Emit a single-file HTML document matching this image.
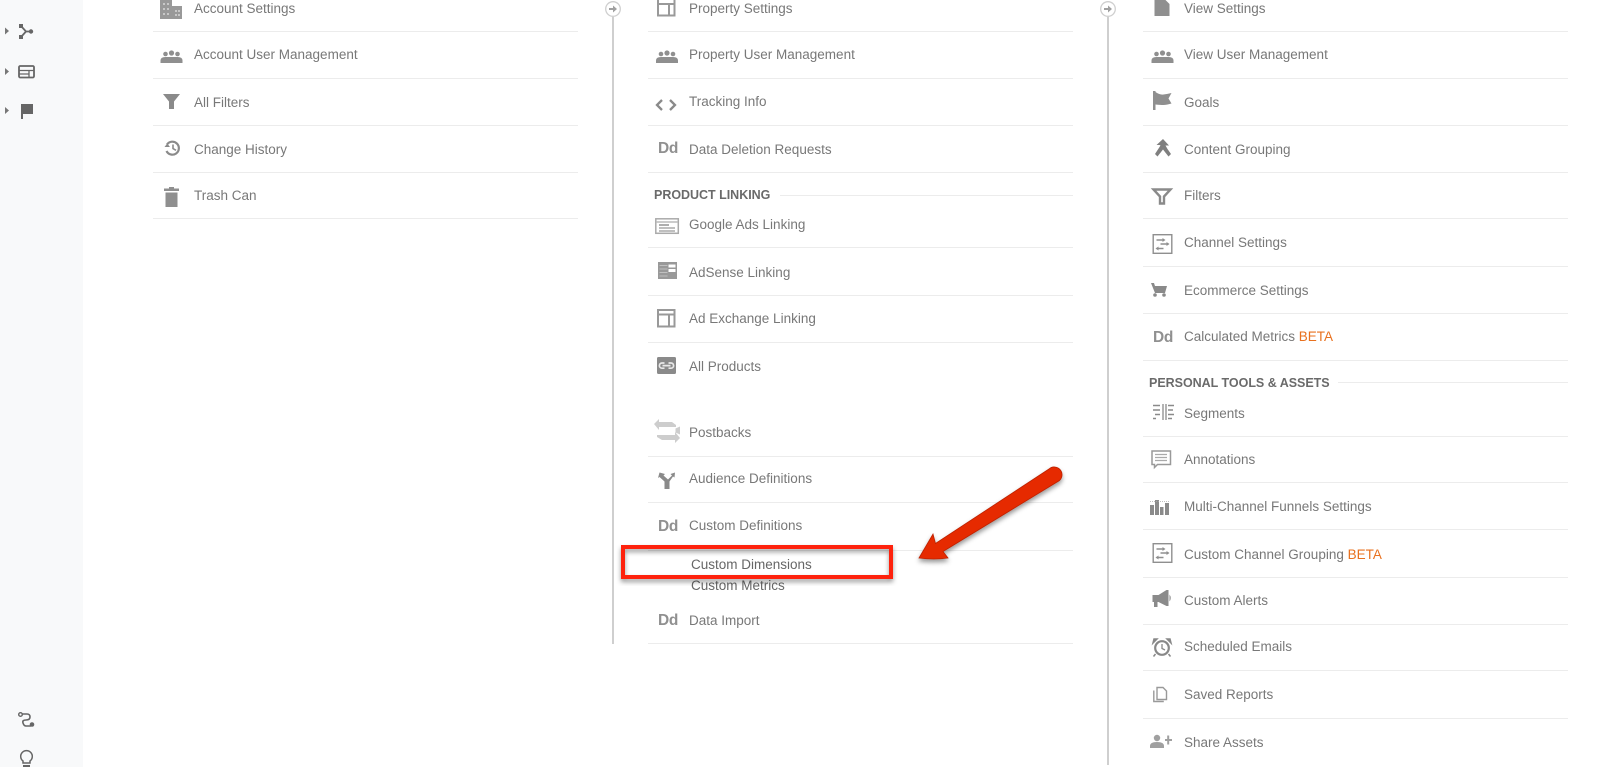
<!DOCTYPE html>
<html lang="en"><head><meta charset="utf-8"><title>Admin</title>
<style>
html,body{margin:0;padding:0;background:#fff}
#p{position:relative;width:1600px;height:767px;overflow:hidden;background:#fff;font-family:"Liberation Sans",sans-serif;filter:blur(.35px)}
#side{position:absolute;left:0;top:0;width:83px;height:767px;background:#f8f9fa}
.t{position:absolute;margin-top:1px;line-height:20px;font-size:13.5px;letter-spacing:0;color:#787878;white-space:nowrap}
.h{position:absolute;margin-top:1px;line-height:20px;font-size:12.5px;font-weight:bold;letter-spacing:-.02px;color:#6a6a6a;white-space:nowrap}
.d{position:absolute;margin-top:1px;line-height:20px;font-size:15.5px;font-weight:bold;color:#909090;letter-spacing:-.3px}
.b{color:#e8711f}
.s{position:absolute;height:1px;background:#ececec}
.c1{left:153px;width:425px}.c2{left:648px;width:425px}.c3{left:1143px;width:425px}
svg{position:absolute;left:0;top:0}
</style></head><body><div id="p">
<div id="side"></div>

<div class="s c1" style="top:31px"></div><div class="s c1" style="top:78px"></div><div class="s c1" style="top:125px"></div><div class="s c1" style="top:172px"></div><div class="s c1" style="top:218px"></div>
<div class="s c2" style="top:31px"></div><div class="s c2" style="top:78px"></div><div class="s c2" style="top:125px"></div><div class="s c2" style="top:172px"></div>
<div class="s" style="left:780px;width:293px;top:195px"></div>
<div class="s c2" style="top:247px"></div><div class="s c2" style="top:295px"></div><div class="s c2" style="top:342px"></div><div class="s c2" style="top:456px"></div><div class="s c2" style="top:502px"></div><div class="s c2" style="top:550px"></div><div class="s c2" style="top:643px"></div>
<div class="s c3" style="top:31px"></div><div class="s c3" style="top:78px"></div><div class="s c3" style="top:125px"></div><div class="s c3" style="top:172px"></div><div class="s c3" style="top:218px"></div><div class="s c3" style="top:266px"></div><div class="s c3" style="top:313px"></div><div class="s c3" style="top:360px"></div>
<div class="s" style="left:1338px;width:230px;top:382px"></div>
<div class="s c3" style="top:436px"></div><div class="s c3" style="top:482px"></div><div class="s c3" style="top:529px"></div><div class="s c3" style="top:577px"></div><div class="s c3" style="top:624px"></div><div class="s c3" style="top:670px"></div><div class="s c3" style="top:718px"></div>

<div class="t" style="left:194px;top:-2px">Account Settings</div>
<div class="t" style="left:194px;top:44px">Account User Management</div>
<div class="t" style="left:194px;top:92px">All Filters</div>
<div class="t" style="left:194px;top:139px">Change History</div>
<div class="t" style="left:194px;top:185px">Trash Can</div>

<div class="t" style="left:689px;top:-2px">Property Settings</div>
<div class="t" style="left:689px;top:44px">Property User Management</div>
<div class="t" style="left:689px;top:91px">Tracking Info</div>
<div class="t" style="left:689px;top:139px">Data Deletion Requests</div>
<div class="h" style="left:654px;top:184px">PRODUCT LINKING</div>
<div class="t" style="left:689px;top:214px">Google Ads Linking</div>
<div class="t" style="left:689px;top:262px">AdSense Linking</div>
<div class="t" style="left:689px;top:308px">Ad Exchange Linking</div>
<div class="t" style="left:689px;top:356px">All Products</div>
<div class="t" style="left:689px;top:422px">Postbacks</div>
<div class="t" style="left:689px;top:468px">Audience Definitions</div>
<div class="t" style="left:689px;top:515px">Custom Definitions</div>
<div class="t" style="left:691px;top:554px;color:#666">Custom Dimensions</div>
<div class="t" style="left:691px;top:575px;color:#666">Custom Metrics</div>
<div class="t" style="left:689px;top:610px">Data Import</div>

<div class="t" style="left:1184px;top:-2px">View Settings</div>
<div class="t" style="left:1184px;top:44px">View User Management</div>
<div class="t" style="left:1184px;top:92px">Goals</div>
<div class="t" style="left:1184px;top:139px">Content Grouping</div>
<div class="t" style="left:1184px;top:185px">Filters</div>
<div class="t" style="left:1184px;top:232px">Channel Settings</div>
<div class="t" style="left:1184px;top:280px">Ecommerce Settings</div>
<div class="t" style="left:1184px;top:326px">Calculated Metrics <span class="b">BETA</span></div>
<div class="h" style="left:1149px;top:372px">PERSONAL TOOLS &amp; ASSETS</div>
<div class="t" style="left:1184px;top:403px">Segments</div>
<div class="t" style="left:1184px;top:449px">Annotations</div>
<div class="t" style="left:1184px;top:496px">Multi-Channel Funnels Settings</div>
<div class="t" style="left:1184px;top:544px">Custom Channel Grouping <span class="b">BETA</span></div>
<div class="t" style="left:1184px;top:590px">Custom Alerts</div>
<div class="t" style="left:1184px;top:636px">Scheduled Emails</div>
<div class="t" style="left:1184px;top:684px">Saved Reports</div>
<div class="t" style="left:1184px;top:732px">Share Assets</div>

<div class="d" style="left:658px;top:138px">Dd</div>
<div class="d" style="left:658px;top:516px">Dd</div>
<div class="d" style="left:658px;top:610px">Dd</div>
<div class="d" style="left:1153px;top:327px">Dd</div>

<svg width="1600" height="767" viewBox="0 0 1600 767" xmlns="http://www.w3.org/2000/svg">
<defs>
<filter id="sh" x="-20%" y="-20%" width="140%" height="150%"><feDropShadow dx="0" dy="3" stdDeviation="2.5" flood-color="#000" flood-opacity=".4"/></filter>
<g id="ppl" fill="#8f8f8f"><circle cx="5" cy="4" r="2.3"/><circle cx="11" cy="3" r="2.6"/><circle cx="17" cy="4" r="2.3"/><path d="M0 13V10.500Q0 7 5 7H17Q22 7 22 10.500V13Z"/></g>
<g id="chan" fill="none" stroke="#8f8f8f"><rect x=".7" y=".7" width="18.600" height="18.600" stroke-width="1.400"/><path d="M4 6h7M8 10h8M4 14.500h7" stroke-width="1.500"/><path d="M10 4l3 2-3 2zM14 8l3 2-3 2zM6 12.500l-3 2 3 2z" fill="#8f8f8f" stroke="none"/></g>
</defs>

<g fill="#777"><path d="M5 27.500l4 3.500-4 3.500zM5 68l4 3.500-4 3.500zM5 107l4 3.500-4 3.500z"/></g>
<g fill="#666" stroke="#666">
<path d="M21 26l5 5.500h5M21 37l5-5.500" fill="none" stroke-width="1.800"/><rect x="19" y="24" width="4" height="4" stroke="none"/><rect x="19" y="35" width="4" height="4" stroke="none"/><circle cx="31" cy="31.500" r="2.200" stroke="none"/>
<rect x="19" y="66" width="15" height="11.500" rx="1.200" fill="none" stroke-width="1.800"/><path d="M19 70.500h15M19 74h10M29 70.500v6.500" fill="none" stroke-width="1.300"/>
<path d="M21 104h12v10H23v5h-2z" stroke="none"/>
<path d="M21 715h6q3 0 3 3t-4 3t-3 3t3 3h5" fill="none" stroke-width="1.600" transform="translate(0 -1)" />
<circle cx="20.500" cy="714.500" r="1.800" fill="#f8f9fa" stroke-width="1.400"/><circle cx="32" cy="724.500" r="2.300" stroke="none"/>
<path d="M23 761a5.800 5.800 0 1 1 7 0v2h-7z" fill="none" stroke-width="1.500"/><rect x="23" y="765" width="7" height="2" stroke="none"/>
</g>

<g stroke="#cfcfcf" fill="none"><path d="M613 17V644" stroke-width="2"/><circle cx="613" cy="9" r="7.300" stroke-width="1.300"/><path d="M1108 17V765" stroke-width="2"/><circle cx="1108" cy="9" r="7.300" stroke-width="1.300"/></g>
<g fill="#a0a0a0"><path d="M609 8h4V5.500l4 3.500-4 3.500V10h-4zM1104 8h4V5.500l4 3.500-4 3.500V10h-4z"/></g>

<!-- column 1 -->
<path d="M160 0h12v6h10v13h-22z" fill="#999"/>
<g fill="#c8c8c8"><rect x="163" y="3" width="2" height="2"/><rect x="167" y="3" width="2" height="2"/><rect x="163" y="8" width="2" height="2"/><rect x="167" y="8" width="2" height="2"/><rect x="163" y="13" width="2" height="2"/><rect x="167" y="13" width="2" height="2"/><rect x="175" y="10" width="2" height="2"/><rect x="178" y="10" width="2" height="2"/><rect x="175" y="14" width="2" height="2"/><rect x="178" y="14" width="2" height="2"/></g>
<use href="#ppl" x="160.500" y="50"/>
<path d="M163 94H180L174 101.500V109H169V101.500Z" fill="#8a8a8a"/>
<path d="M167 144.500A6.500 6.500 0 1 1 166.500 151" fill="none" stroke="#8a8a8a" stroke-width="2.200"/><path d="M164.500 147h5.500l-2.800-3.500z" fill="#8a8a8a"/><path d="M173 144.500V148.500l3 1.800" fill="none" stroke="#8a8a8a" stroke-width="1.600"/>
<path d="M164 188.500h5v-1.500h5v1.500h5v2.500h-15zM165.500 192.500h12v14.500h-12z" fill="#8f8f8f"/>

<!-- column 2 -->
<g fill="none" stroke="#999" stroke-width="2"><rect x="658" y="-2" width="16.500" height="17.500"/><path d="M658 4h16.500M669 4v11.500"/>
<rect x="658" y="310" width="16.500" height="16.500"/><path d="M658 314.500h16.500M669 314.500v12"/></g>
<use href="#ppl" x="656" y="50"/>
<path d="M662 100l-5 5 5 5M670 100l5 5-5 5" fill="none" stroke="#8a8a8a" stroke-width="2.300"/>
<rect x="655.800" y="218.800" width="22.500" height="14.500" fill="none" stroke="#aaa" stroke-width="1.500"/><path d="M656 222h22" stroke="#bbb" stroke-width="1.500"/><path d="M659 225h10" stroke="#999" stroke-width="1.600"/><path d="M659 228h16M659 231h16" stroke="#aaa" stroke-width="1.400"/>
<rect x="658" y="262" width="19" height="17" fill="#999"/><path d="M659.500 265.500h8M659.500 269h8M659.500 272.500h8M659.500 276h8" stroke="#c0c0c0" stroke-width="1"/><path d="M668.500 264.500h7v3h-7zM668.500 269h7v3h-7z" fill="#fff"/>
<rect x="657" y="357" width="19" height="17" rx="1.500" fill="#8a8a8a"/><path d="M664.500 363h-2.500a2.600 2.600 0 0 0 0 5.200h2.500M668.500 363h2.500a2.600 2.600 0 0 1 0 5.200h-2.500M662.500 365.600h8" fill="none" stroke="#e8e8e8" stroke-width="1.700"/>
<g fill="#cdcdcd"><path d="M654 424l5-5v3h13l4 3v2h-17v3zM680 438l-5 5v-3h-13l-5-3v-2h18v-3z"/><path d="M680 426.500v8l-4.500-2v-4z"/></g>
<path d="M659.500 472.500l5.500 1.500-1.500 1.500 4.500 4 4-4-1.500-1.500 4.500-1.500-.5 5-1.500-1-3.500 5v7.500h-5v-7.500l-5-4.500-1.500 1z" fill="#8a8a8a"/>

<!-- column 3 -->
<path d="M1154.500 -2h9l6 6v12h-15z" fill="#8f8f8f"/>
<use href="#ppl" x="1151.500" y="50"/>
<path d="M1153 91h2.500v19h-2.500zM1155.500 92q4 3 8 2.500t8 -1.500l-3 5.500 3 5q-5 1.500-8 1.500t-8-.5z" fill="#8f8f8f"/>
<path d="M1163 139l6 6.500h-3.500l2 3.500 3.500 5-2.500 2.500-5.500-7-5.500 7-2.500-2.500 5.500-8.500-1-.5h-3z" fill="#7f7f7f"/>
<path d="M1153.500 189.500h17l-6.500 7v7h-4v-7z" fill="none" stroke="#8a8a8a" stroke-width="2.400"/>
<use href="#chan" x="1152.500" y="234"/>
<path d="M1151 283h3l1 3h12l-2 7h-10z" fill="#8a8a8a"/><circle cx="1155" cy="295" r="1.800" fill="#8a8a8a"/><circle cx="1164" cy="295" r="1.800" fill="#8a8a8a"/>
<path d="M1163 404v16M1166 404v16" stroke="#8a8a8a" stroke-width="1.300"/><path d="M1153 405.500h7M1153 410h7M1155 414.500h5M1153 418.500h3M1168 405.500h6M1168 410h5M1168 414.500h6M1168 418.500h4" stroke="#8a8a8a" stroke-width="1.600"/>
<path d="M1152 451h18.500v13.500h-13l-3 3v-3h-2.500z" fill="none" stroke="#999" stroke-width="1.500"/><path d="M1155 454.500h12M1155 457.500h12M1155 460.500h12" stroke="#aaa" stroke-width="1.300"/>
<g fill="#8a8a8a"><rect x="1150" y="505" width="4" height="10"/><rect x="1155" y="500" width="4" height="15"/><rect x="1160" y="507" width="3.500" height="8"/><rect x="1165" y="503" width="4" height="12"/></g><path d="M1150 501.500h20" stroke="#aaa" stroke-width=".8" stroke-dasharray="1 1"/>
<use href="#chan" x="1152.500" y="543"/>
<path d="M1152.500 595h6l8-5h2v16h-2l-8-4h-1v5h-3.500v-5h-1.500zM1169.500 594.500q2.500 3.500 0 7z" fill="#8a8a8a"/>
<circle cx="1162" cy="648" r="6.800" fill="none" stroke="#888" stroke-width="2.200"/><path d="M1162 644v4.500l3 1.500" fill="none" stroke="#888" stroke-width="1.300"/><path d="M1153 643l4-4h-3zM1171 643l-4-4h3zM1155.500 654l-2 2.500M1168.500 654l2 2.500" fill="#888" stroke="#888" stroke-width="1.500"/>
<path d="M1157 687.500h6l3.500 3.500v8.500h-9.500zM1153.800 690.500v11h10" fill="none" stroke="#999" stroke-width="1.400"/>
<circle cx="1157" cy="738" r="3.200" fill="#a0a0a0"/><path d="M1150 748v-2q0-4 7-4t7 4v2zM1165 739h2.200v-3.500h2v3.500h2.800v2h-2.800v3.500h-2v-3.500h-2.200z" fill="#a0a0a0"/>

<!-- annotation -->
<rect x="623" y="547" width="268" height="30" fill="none" stroke="#fe2208" stroke-width="4" filter="url(#sh)"/>
<path d="M919 558L933 534L935.500 543.500L1049 469A7 7 0 0 1 1059.500 480.500L943 551.500L948 558Q934 560 919 558Z" fill="#e62a04" stroke="#bd2200" stroke-width=".8" filter="url(#sh)"/>
</svg>
</div></body></html>
